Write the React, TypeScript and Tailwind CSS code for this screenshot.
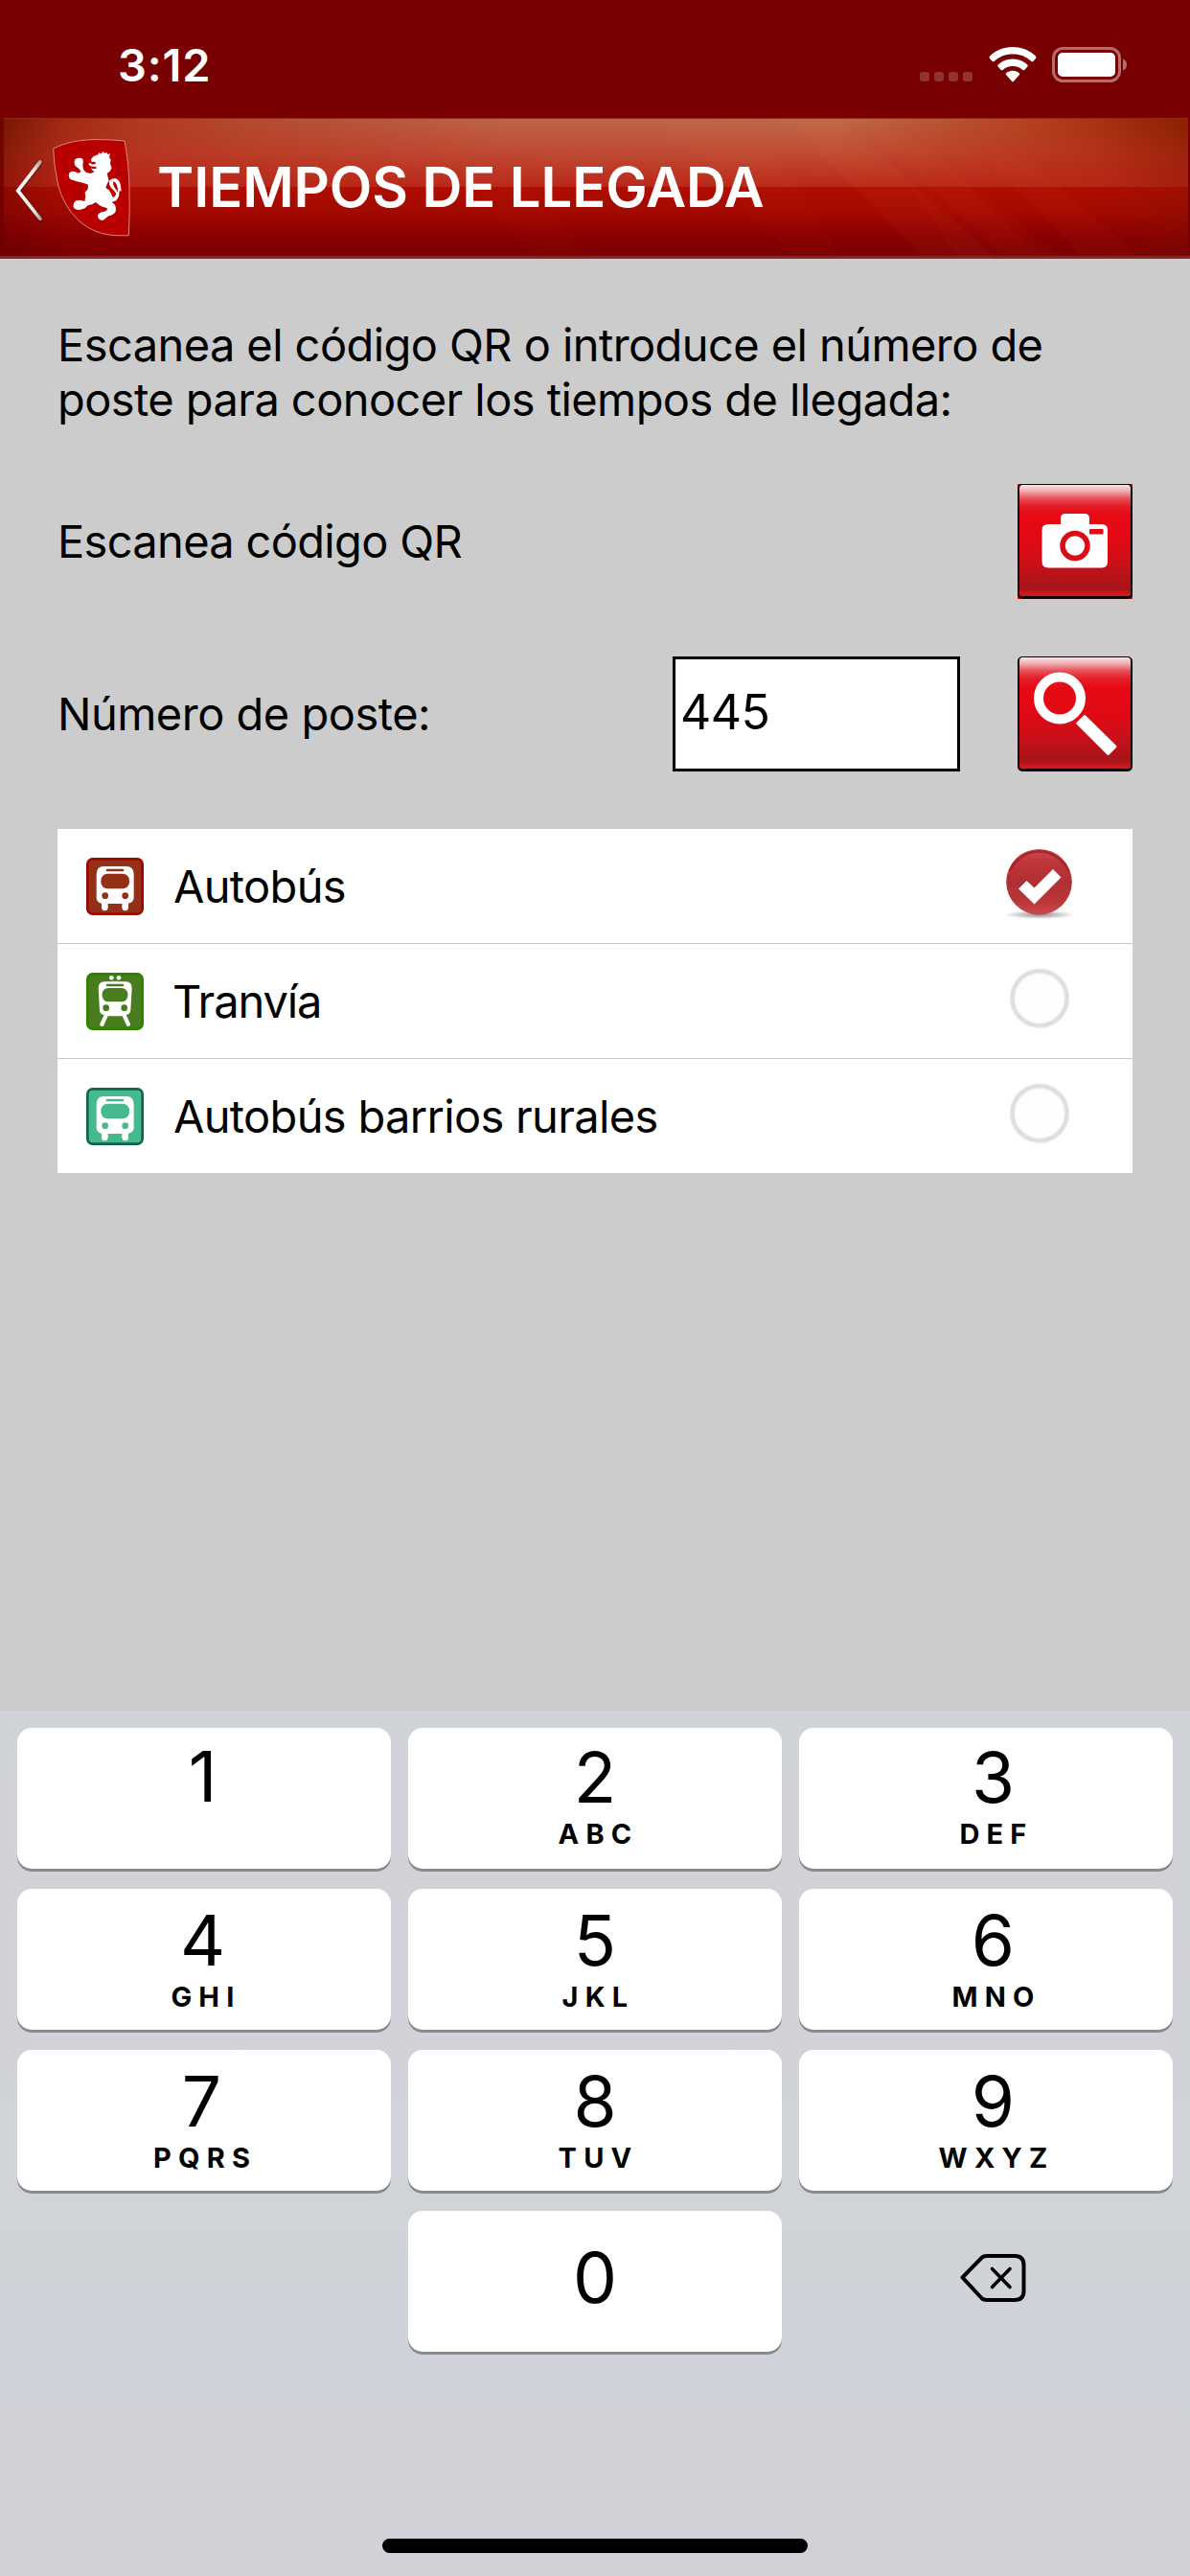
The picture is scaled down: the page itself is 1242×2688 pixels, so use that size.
import React from 'react';

const StatusBar: React.FC = () => (
  <div className="flex h-[123px] items-start bg-[#780000] text-white">
    <span className="mt-[44px] ml-[123px] text-[47px] leading-[47px] font-semibold tracking-[0.8px]">3:12</span>
    <div className="mt-[49px] mr-[65px] ml-auto flex h-[37px]">
      <div className="mt-[26px] mr-[17px] flex gap-[5px]">
        <span className="h-[10px] w-[10px] rounded-[3px] bg-[#933333]" />
        <span className="h-[10px] w-[10px] rounded-[3px] bg-[#933333]" />
        <span className="h-[10px] w-[10px] rounded-[3px] bg-[#933333]" />
        <span className="h-[10px] w-[10px] rounded-[3px] bg-[#933333]" />
      </div>
      <svg className="mr-[16px]" width="50" height="37" viewBox="0 0 50 37" fill="#fff">
        <path d="M25 0C34.5 0 43 3.6 49 9.6Q50 10.8 49 12L46.4 14.9Q45.4 15.8 44.3 14.9C39 10 32.5 7.5 25 7.5S11 10 5.7 14.9Q4.6 15.8 3.6 14.9L1 12Q0 10.8 1 9.6C7 3.6 15.5 0 25 0Z" />
        <path d="M25 12.4C31 12.4 36.3 14.6 40.3 18.4Q41.3 19.5 40.3 20.6L37.4 23.9Q36.4 24.8 35.3 23.9C32.5 21.4 29 20 25 20S17.5 21.4 14.7 23.9Q13.6 24.8 12.6 23.9L9.7 20.6Q8.7 19.5 9.7 18.4C13.7 14.6 19 12.4 25 12.4Z" />
        <path d="M25 24.8C27.8 24.8 30.1 25.8 31.7 27.2Q32.6 28.2 31.7 29.3L26 35.7Q25 36.7 24 35.7L18.3 29.3Q17.4 28.2 18.3 27.2C19.9 25.8 22.2 24.8 25 24.8Z" />
      </svg>
      <svg width="79" height="37" viewBox="0 0 79 37">
        <rect x="1.5" y="1.5" width="69" height="34" rx="10" fill="none" stroke="#b46c6c" strokeWidth="3" />
        <rect x="6" y="6" width="60" height="25" rx="5" fill="#fff" />
        <path d="M74 12.5C76.6 13.5 78 15.5 78 18.5S76.6 23.5 74 24.5Z" fill="#b46c6c" />
      </svg>
    </div>
  </div>
);

const Shield: React.FC = () => (
  <svg className="mt-[20px] ml-[6px]" width="84" height="105" viewBox="162 99 252 315">
    <path d="M167 135C205 116 250 106 310 107Q350 107 390 111C398 155 404 200 405 262Q407 330 403 407C370 408 335 408 300 394C240 370 195 310 180 240Q169 190 167 135Z" fill="#b80000" stroke="#d98a80" strokeWidth="3" />
    <path d="M307 154L311 147L316 152L323 144L328 150L334 147L337 153L345 151L342 162L347 170L345 182L350 196L344 206L336 212L337 222L341 235L335 247L331 258L341 265L348 276L353 288Q362 286 364 277Q359 267 348 258Q340 248 342 236Q350 228 362 229Q373 233 377 247L380 268L374 268L372 285L364 298L350 303L358 309Q365 318 362 332Q355 343 340 346L330 354Q322 363 313 358Q304 352 307 342Q313 333 324 333L334 329L336 322L321 317Q308 312 300 303L288 310L275 313L266 322L250 327Q236 328 230 319Q228 306 238 298L252 297L265 300L268 286L266 272L275 262L276 248L262 243L240 238L222 232Q213 226 216 213Q222 204 234 207L246 212L254 207L247 198L236 190Q230 179 235 169Q244 161 257 166Q263 173 259 186L261 200L270 210L283 213L296 208L290 203L284 196L292 199L303 197L300 192L286 191L277 185L281 179L290 185L300 182L298 176L287 177L285 168L293 159Z" fill="#fff" />
    <path d="M355 238Q352 246 358 256Q365 265 368 272Q370 259 366 249Q362 240 355 238Z" fill="#b80000" />
  </svg>
);

const Header: React.FC = () => (
  <header className="relative h-[147px] overflow-hidden bg-[#780000]">
    {/* glossy bar background */}
    <div className="absolute inset-x-0 top-0 h-[144px] bg-[linear-gradient(180deg,#b00e00_50%,#a20a00_68%,#8a0000_86%,#780000)]" />
    <div className="absolute inset-x-0 top-0 h-[72px] bg-[linear-gradient(90deg,#8a2408,#a83018_6%,#b24a30_20%,#bc644a_42%,#be6a4c_70%,#b24422_86%,#a43210_93%,#902600)]" />
    <div className="absolute inset-x-0 top-0 h-[72px] bg-[linear-gradient(180deg,rgba(196,60,40,0),rgba(194,48,30,0.5)_50%,rgba(186,36,22,0.95))]" />
    <svg className="absolute inset-0" width="1242" height="147" viewBox="0 0 1242 147" fill="#ff7040">
      <path d="M820 0H875L1040 147H965Z" opacity=".05" />
      <path d="M895 0H925L1110 147H1050Z" opacity=".035" />
      <path d="M950 72H1010L1090 147H1000Z" opacity=".04" />
      <path d="M1030 40H1070L1190 147H1130Z" opacity=".04" />
      <path d="M690 0H780L880 147H830Z" opacity=".025" />
      <path d="M430 0H480L620 147H560Z" opacity=".02" />
    </svg>
    <div className="absolute inset-0 bg-[linear-gradient(90deg,rgba(90,0,0,0.4),rgba(110,0,0,0.12)_5%,transparent_12%,transparent_92%,rgba(120,20,0,0.3))]" />
    <div className="absolute inset-x-0 top-0 h-px bg-[#8e2a1c]" />
    <div className="absolute inset-y-0 left-0 w-[4px] bg-[#6e0000]/80" />
    <div className="absolute inset-y-0 right-0 w-[2px] bg-[#780000]" />
    <div className="absolute inset-x-0 bottom-0 h-[3px] bg-[#8a2426]" />

    <div className="relative flex items-start">
      <svg className="mt-[42px] ml-[14px]" width="34" height="72" viewBox="42 165 102 216" fill="none" strokeLinecap="round">
        <defs>
          <linearGradient id="chev" x1="0" x2="1" y1="0" y2="0">
            <stop offset="0" stopColor="#fff" />
            <stop offset=".7" stopColor="#f0ecec" />
            <stop offset="1" stopColor="#b0a0a0" />
          </linearGradient>
        </defs>
        <path d="M128 178L58 268L128 358" stroke="#500000" strokeOpacity=".5" strokeWidth="15" />
        <path d="M126 177L56 267L126 355" stroke="url(#chev)" strokeWidth="11" />
      </svg>
      <Shield />
      <h1 className="mt-[43px] ml-[26px] text-[58px] leading-[58px] font-semibold tracking-[-0.1px] text-white">
        TIEMPOS DE LLEGADA
      </h1>
    </div>
  </header>
);

const RedButton: React.FC<{ label: string; corners?: boolean; children: React.ReactNode }> = ({ label, corners, children }) => (
  <button aria-label={label} className={`h-[120px] w-[120px] ${corners ? 'bg-[#e00000]' : ''}`}>
    <span className="block h-[120px] w-[120px] rounded-[5px] border-2 border-t-1 border-b-3 border-[#160404] bg-[linear-gradient(180deg,#f8e4e4,#f0b4b6_5%,#e8505a_12%,#e41e28_19%,#e60a14_27%,#e00a14_52%,#c81018_72%,#a81418_91%,#aa1418_94%,#d0181e_98%)]">
      {children}
    </span>
  </button>
);

const BusIcon: React.FC<{ fill: string; border: string }> = ({ fill, border }) => (
  <svg width="60" height="60" viewBox="0 0 180 180">
    <rect x="4" y="4" width="172" height="172" rx="16" fill={fill} stroke={border} strokeWidth="8" />
    <path d="M54 27H126Q148 28 149 50V126Q148 140 132 143V158Q130 166 122 166Q114 166 112 158V144H68V158Q66 166 58 166Q50 166 48 158V143Q33 140 32 126V50Q33 28 54 27Z" fill="#fff" />
    <rect x="62" y="35" width="56" height="8" rx="4" fill={fill} />
    <rect x="46" y="50" width="89" height="47" rx="21" fill={fill} />
    <circle cx="59" cy="119" r="10" fill={fill} />
    <circle cx="122" cy="119" r="10" fill={fill} />
  </svg>
);

const TramIcon: React.FC = () => (
  <svg width="60" height="60" viewBox="0 0 180 180">
    <rect x="4" y="4" width="172" height="172" rx="16" fill="#487c1e" stroke="#2f8200" strokeWidth="8" />
    <circle cx="79" cy="16" r="7" fill="#fff" />
    <circle cx="102" cy="16" r="7" fill="#fff" />
    <path d="M84 24L88 30H93L97 24" fill="none" stroke="#fff" strokeWidth="2" opacity=".7" />
    <path d="M58 28H124Q143 29 143 48L139 118Q138 130 125 132L138 160Q138 170 128 168L113 136H68L54 167Q44 171 42 162L56 132Q42 130 42 118L38 48Q38 29 58 28Z" fill="#fff" />
    <rect x="62" y="35" width="56" height="8" rx="4" fill="#487c1e" />
    <rect x="50" y="48" width="80" height="43" rx="19" fill="#487c1e" />
    <circle cx="62" cy="110" r="10" fill="#487c1e" />
    <circle cx="119" cy="110" r="10" fill="#487c1e" />
  </svg>
);

const Radio: React.FC<{ checked?: boolean }> = ({ checked }) => (
  <svg className="mr-[57px] ml-auto" width="80" height="80" viewBox="0 0 80 80">
    {checked ? (
      <>
        <defs>
          <linearGradient id="disc" x1="0" x2="0" y1="0" y2="1">
            <stop offset="0" stopColor="#c84a4c" />
            <stop offset=".2" stopColor="#c03638" />
            <stop offset=".5" stopColor="#ae3032" />
            <stop offset=".8" stopColor="#bc3638" />
            <stop offset="1" stopColor="#cc4a4c" />
          </linearGradient>
          <radialGradient id="shade">
            <stop offset="0" stopColor="#000" stopOpacity=".45" />
            <stop offset="1" stopColor="#000" stopOpacity="0" />
          </radialGradient>
        </defs>
        <ellipse cx="40" cy="69.5" rx="37" ry="4.5" fill="url(#shade)" />
        <circle cx="39.5" cy="35.3" r="34.3" fill="url(#disc)" />
        <path d="M9 24A33 33 0 0 1 70 24" fill="none" stroke="#a82428" strokeWidth="2.5" />
        <path d="M18 42.5L26.5 34L34.5 41.5L54 22L62.5 30.5L34.5 58.5Z" fill="#fff" />
      </>
    ) : (
      <>
        <circle cx="40" cy="36.7" r="28.5" fill="#fefefe" stroke="#f0f0f0" strokeWidth="6" />
        <circle cx="40" cy="36.7" r="28.5" fill="none" stroke="#dedede" strokeWidth="3.6" />
      </>
    )}
  </svg>
);

const Key: React.FC<{ digit: string; letters?: string; className?: string }> = ({ digit, letters, className = '' }) => (
  <button className={`flex h-[147px] flex-col items-center rounded-[15px] bg-white text-black shadow-[0_3px_0_#898a8d] ${className}`}>
    <span className="text-[73px] leading-[73px]">{digit}</span>
    {letters && (
      <span className="mt-[8px] mr-[-7px] text-[29px] leading-[29px] font-bold tracking-[7.2px]">{letters}</span>
    )}
  </button>
);

const App: React.FC = () => {
  return (
    <div className="flex h-[2688px] w-[1242px] flex-col bg-[#cccccc] font-['Inter','Liberation_Sans',sans-serif] text-black">
      <StatusBar />
      <Header />

      <main className="flex-1 px-[60px] pt-[61px] text-[47px]">
        <p className="h-[114px] leading-[57px] tracking-[-0.58px]">
          Escanea el código QR o introduce el número de
          <br />
          poste para conocer los tiempos de llegada:
        </p>

        <div className="mt-[60px] flex h-[120px] items-center justify-between">
          <span className="pb-[1px] leading-[57px] tracking-[-0.68px]">Escanea código QR</span>
          <RedButton label="Escanear" corners>
            <svg className="mt-[-1px] ml-[-2px]" width="120" height="120" viewBox="0 0 120 120">
              <path d="M50 31H70Q75 31 75 36V42H88Q94 42 94 48V81Q94 87.5 88 87.5H32Q25.5 87.5 25.5 81V48Q25.5 42 32 42H45V36Q45 31 50 31Z" fill="#fff" />
              <circle cx="60" cy="64.5" r="13" fill="#fff" stroke="#da0c16" strokeWidth="5.5" />
              <rect x="75" y="47" width="14.5" height="5.5" rx="1" fill="#e00a14" />
            </svg>
          </RedButton>
        </div>

        <div className="mt-[60px] flex h-[120px] items-center">
          <label className="mr-auto pb-[2px] leading-[57px] tracking-[-0.5px]">Número de poste:</label>
          <div className="mr-[60px] flex h-[120px] w-[300px] items-center border-3 border-black bg-white pb-[4px] pl-[5px] text-[50px] leading-[57px] tracking-[-0.5px]">
            445
          </div>
          <RedButton label="Buscar">
            <svg className="mt-[-1px] ml-[-2px]" width="120" height="120" viewBox="0 0 120 120">
              <circle cx="44" cy="43.5" r="22" fill="none" stroke="#fff" strokeWidth="10" />
              <path d="M61.5 69L69 61.5Q70 60.5 71.5 62L103 93Q104 94 103 95L95.5 102.5Q94.5 103.5 93.5 102.5L62 71Q60.8 70 61.5 69Z" fill="#fff" />
            </svg>
          </RedButton>
        </div>

        <ul className="mt-[60px] bg-white leading-[57px] tracking-[-0.68px]">
          <li className="flex h-[120px] items-center border-b border-[#c8c8c8] pl-[30px]">
            <BusIcon fill="#943018" border="#9c0800" />
            <span className="ml-[31px]">Autobús</span>
            <Radio checked />
          </li>
          <li className="flex h-[120px] items-center border-b border-[#c8c8c8] pl-[30px]">
            <TramIcon />
            <span className="ml-[30px] tracking-[-1.1px]">Tranvía</span>
            <Radio />
          </li>
          <li className="flex h-[119px] items-center pl-[30px]">
            <BusIcon fill="#46ba8c" border="#0e6450" />
            <span className="ml-[31px]">Autobús barrios rurales</span>
            <Radio />
          </li>
        </ul>
      </main>

      <div className="flex h-[903px] flex-col items-center bg-[linear-gradient(180deg,#d0d3d8,#d0d2d8_30%,#d0d4d8_60%,#cfd2da_75%,#d1d2d7_85%,#d0d2d8)] px-[18px] pt-[18px]">
        <div className="grid w-full grid-cols-3 gap-x-[18px] gap-y-[21px]">
          <Key digit="1" className="pt-[14px] pr-[3px]" />
          <Key digit="2" letters="ABC" className="pt-[15px]" />
          <Key digit="3" letters="DEF" className="pt-[15px] pl-[15px]" />
          <Key digit="4" letters="GHI" className="pt-[17px] pr-[3px]" />
          <Key digit="5" letters="JKL" className="pt-[17px]" />
          <Key digit="6" letters="MNO" className="pt-[17px] pl-[15px]" />
          <Key digit="7" letters="PQRS" className="pt-[17px] pr-[5px]" />
          <Key digit="8" letters="TUV" className="pt-[17px]" />
          <Key digit="9" letters="WXYZ" className="pt-[17px] pl-[15px]" />
          <Key digit="0" className="col-start-2 pt-[33px]" />
          <div className="flex items-center justify-center pb-[7px] pl-[15px]">
            <svg width="70" height="52" viewBox="0 0 70 52" fill="none" stroke="#000" strokeLinejoin="round" strokeLinecap="round">
              <path d="M2.5 25.5L22 5.5Q24 3 28 3H57Q66.5 3 66.5 12.5V39.5Q66.5 49 57 49H28Q24 49 22 46.5Z" strokeWidth="4" />
              <path d="M33.5 16.5L52 35.5M52 16.5L33.5 35.5" strokeWidth="3.6" />
            </svg>
          </div>
        </div>
        <div className="mt-[195px] h-[15px] w-[444px] rounded-full bg-black" />
      </div>
    </div>
  );
};

export default App;
